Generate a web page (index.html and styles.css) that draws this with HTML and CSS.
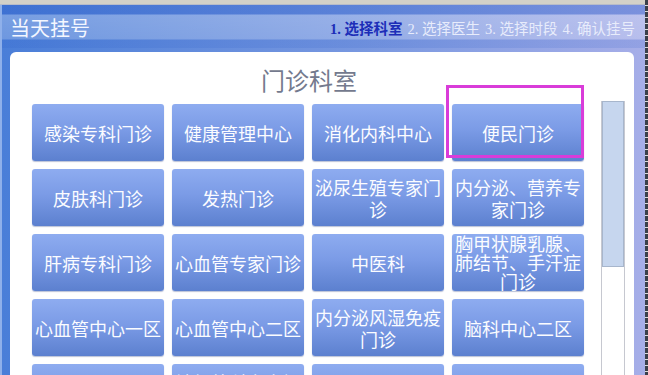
FILE: index.html
```html
<!DOCTYPE HTML>
<html>
<head>
<meta charset="utf-8">
<title>当天挂号</title>
<link rel="stylesheet" href="styles.css">
</head>
<body>
  <div class="screen">
    <div class="frame">
      <div class="topline"></div>
      <div class="header">
        <span class="title">当天挂号</span>
        <div class="steps">
          <span class="step active">1. 选择科室</span>
          <span class="step">2. 选择医生</span>
          <span class="step">3. 选择时段</span>
          <span class="step">4. 确认挂号</span>
        </div>
      </div>
      <div class="panel">
        <h1 class="panel-title">门诊科室</h1>
        <div class="panel-body">
          <div class="dept-grid">
            <button class="dept">感染专科门诊</button>
            <button class="dept">健康管理中心</button>
            <button class="dept">消化内科中心</button>
            <button class="dept selected">便民门诊</button>
            <button class="dept">皮肤科门诊</button>
            <button class="dept">发热门诊</button>
            <button class="dept">泌尿生殖专家门诊</button>
            <button class="dept">内分泌、营养专家门诊</button>
            <button class="dept">肝病专科门诊</button>
            <button class="dept">心血管专家门诊</button>
            <button class="dept">中医科</button>
            <button class="dept dense">胸甲状腺乳腺、肺结节、手汗症门诊</button>
            <button class="dept">心血管中心一区</button>
            <button class="dept">心血管中心二区</button>
            <button class="dept">内分泌风湿免疫门诊</button>
            <button class="dept">脑科中心二区</button>
            <button class="dept">神经内科</button>
            <button class="dept">神经外科专家门诊</button>
            <button class="dept">眼科</button>
            <button class="dept">口腔科</button>
          </div>
          <div class="scrollbar"><div class="thumb"></div></div>
        </div>
      </div>
    </div>
    <div class="edge"></div>
  </div>
</body>
</html>
```

FILE: styles.css
```css
html,body{
  margin: 0;
  padding: 0;
  height: 375px;
  overflow: hidden;
  font-family: "Noto Sans CJK SC", "Liberation Sans", sans-serif;
}
.screen{
  display: flex;
  height: 375px;
  background: #2e3442;
}
.frame{
  flex: 1;
  display: flex;
  flex-direction: column;
  background: linear-gradient(90deg, #4a7ed8 0%, #7797e0 55%, #a6aee8 100%);
  border-left: 2px solid #8fb0ea;
  box-sizing: border-box;
}
.edge{
  width: 3px;
  background: repeating-linear-gradient(180deg, #3a3f4a 0, #3a3f4a 5px, #dcdcdc 5px, #dcdcdc 6px);
}
.topline{
  flex-shrink: 0;
  height: 4px;
  margin-left: -2px;
  background: #d3d1c8;
  border-bottom: 1px solid #b8bcc8;
}
.header{
  flex-shrink: 0;
  height: 43px;
  display: flex;
  align-items: center;
  justify-content: space-between;
  padding: 0 10px 0 8px;
  background: linear-gradient(180deg, rgba(40,90,200,0.35) 0, rgba(40,90,200,0.35) 9px, rgba(255,255,255,0.25) 10px, rgba(255,255,255,0.2) 34px, rgba(40,90,200,0.15) 35px, rgba(40,90,200,0.15) 43px);
}
.title{
  color: #f4f7ff;
  font-size: 20px;
  margin-top: 1px;
}
.steps{
  display: flex;
  gap: 5px;
  margin-top: 2px;
  font-size: 14.5px;
  font-family: "Liberation Serif", "Noto Sans CJK SC", serif;
}
.step{
  color: #e8ecfb;
}
.step.active{
  color: #1c2db8;
  font-weight: bold;
}
.panel{
  flex: 1 0 auto;
  margin: 4px 11px 0 8px;
  background: #fff;
  border-radius: 6px 6px 0 0;
  padding: 0 0 0 22px;
}
.panel-title{
  margin: 0;
  height: 52px;
  line-height: 56px;
  padding-right: 48px;
  text-align: center;
  font-size: 24px;
  font-weight: normal;
  color: #747a8e;
}
.panel-body{
  display: flex;
  gap: 17px;
}
.dept-grid{
  display: grid;
  grid-template-columns: repeat(4, 132px);
  grid-auto-rows: 57px;
  column-gap: 8px;
  row-gap: 8px;
}
.dept{
  position: relative;
  padding: 0 2px;
  border: none;
  border-radius: 3px;
  background: linear-gradient(180deg, #8eacf0 0%, #7b9be6 45%, #5c80cf 100%);
  box-shadow: 0 1px 1px rgba(60,80,140,0.35);
  color: #fbfcff;
  font-family: "Noto Sans CJK SC", sans-serif;
  font-size: 18px;
  line-height: 22px;
  overflow: visible;
  cursor: pointer;
}
.dept.dense{
  line-height: 19px;
}
.dept.selected::after{
  content: "";
  position: absolute;
  left: -6px;
  top: -19px;
  width: 132px;
  height: 67px;
  border: 3px solid #d93cd9;
}
.scrollbar{
  margin-top: -3px;
  width: 22px;
  height: 280px;
  border-left: 1px solid #c6c8d0;
  border-right: 1px solid #c6c8d0;
}
.thumb{
  height: 166px;
  background: #c6d6ee;
  border: 1px solid #a7b6cc;
  box-sizing: border-box;
}
```
